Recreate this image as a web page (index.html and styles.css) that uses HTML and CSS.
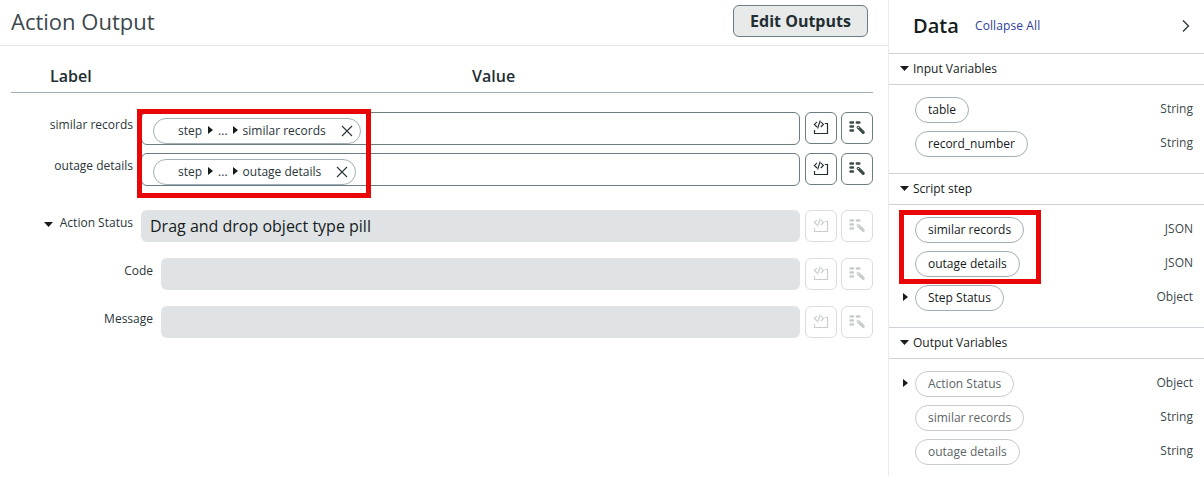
FILE: index.html
```
<!DOCTYPE html>
<html lang="en">
<head>
<meta charset="utf-8">
<title>Action Output</title>
<link rel="stylesheet" href="styles.css">
</head>
<body>
<svg class="defs" width="0" height="0">
  <symbol id="script" viewBox="0 0 32 32">
    <path d="M9.5 18V21.5H22.5V11.5H19.8" fill="none" stroke="currentColor" stroke-width="1.2"/>
    <path d="M12 9.8L9.4 12.4L12 15M15.8 9.8L18.4 12.4L15.8 15M15.2 8.5L12.6 16.5" fill="none" stroke="currentColor" stroke-width="1.1"/>
  </symbol>
  <symbol id="wand" viewBox="0 0 32 32">
    <path d="M9.5 10.5H12M15.8 10.5H18.4M9.5 14.5H12M9.5 18.5H12" fill="none" stroke="currentColor" stroke-width="2.4" stroke-linecap="round"/>
    <path d="M17.2 15.4L22.2 20.4" fill="none" stroke="currentColor" stroke-width="3.2" stroke-linecap="round"/>
    <path d="M16.9 15.1L17.7 15.9" stroke="#fff" stroke-width="1.1"/>
  </symbol>
  <symbol id="close" viewBox="0 0 12 12"><path d="M1 1L11 11M11 1L1 11" fill="none" stroke="currentColor" stroke-width="1.1"/></symbol>
  <symbol id="down" viewBox="0 0 9 5"><path d="M0 0H9L4.5 5Z" fill="currentColor"/></symbol>
  <symbol id="right" viewBox="0 0 5 8"><path d="M0 0L5 4L0 8Z" fill="currentColor"/></symbol>
</svg>
<div class="app">
  <main class="main">
    <header class="head">
      <h1 class="title">Action Output</h1>
      <button class="edit">Edit Outputs</button>
    </header>
    <div class="table">
      <div class="cols"><span class="col-label">Label</span><span class="col-value">Value</span></div>
      <div class="row">
        <label class="label">similar records</label>
        <div class="field"><span class="token token-a"><span>step</span><svg class="sep"><use href="#right"/></svg><span class="dots">...</span><svg class="sep"><use href="#right"/></svg><span>similar records</span><svg class="close"><use href="#close"/></svg></span></div>
        <button class="icon"><svg><use href="#script"/></svg></button>
        <button class="icon"><svg><use href="#wand"/></svg></button>
      </div>
      <div class="row">
        <label class="label">outage details</label>
        <div class="field"><span class="token token-b"><span>step</span><svg class="sep"><use href="#right"/></svg><span class="dots">...</span><svg class="sep"><use href="#right"/></svg><span>outage details</span><svg class="close"><use href="#close"/></svg></span></div>
        <button class="icon"><svg><use href="#script"/></svg></button>
        <button class="icon"><svg><use href="#wand"/></svg></button>
      </div>
      <div class="row row-off">
        <label class="label"><svg class="caret"><use href="#down"/></svg>Action Status</label>
        <div class="field">Drag and drop object type pill</div>
        <button class="icon"><svg><use href="#script"/></svg></button>
        <button class="icon"><svg><use href="#wand"/></svg></button>
      </div>
      <div class="row row-off row-child">
        <label class="label">Code</label>
        <div class="field"></div>
        <button class="icon"><svg><use href="#script"/></svg></button>
        <button class="icon"><svg><use href="#wand"/></svg></button>
      </div>
      <div class="row row-off row-child">
        <label class="label">Message</label>
        <div class="field"></div>
        <button class="icon"><svg><use href="#script"/></svg></button>
        <button class="icon"><svg><use href="#wand"/></svg></button>
      </div>
    </div>
  </main>
  <aside class="side">
    <header class="side-head">
      <h2 class="side-title">Data</h2><a class="collapse">Collapse All</a>
      <svg class="chevron" viewBox="0 0 8 12"><path d="M1 .5L6.5 6L1 11.5" fill="none" stroke="currentColor" stroke-width="1.2"/></svg>
    </header>
    <h3 class="group"><svg class="caret"><use href="#down"/></svg>Input Variables</h3>
    <ul class="items">
      <li class="item"><span class="pill w-table">table</span><span class="type">String</span></li>
      <li class="item"><span class="pill w-number">record_number</span><span class="type">String</span></li>
    </ul>
    <h3 class="group"><svg class="caret"><use href="#down"/></svg>Script step</h3>
    <ul class="items">
      <li class="item"><span class="pill w-similar">similar records</span><span class="type">JSON</span></li>
      <li class="item"><span class="pill w-outage">outage details</span><span class="type">JSON</span></li>
      <li class="item"><svg class="expand"><use href="#right"/></svg><span class="pill w-step">Step Status</span><span class="type">Object</span></li>
    </ul>
    <h3 class="group"><svg class="caret"><use href="#down"/></svg>Output Variables</h3>
    <ul class="items items-muted">
      <li class="item"><svg class="expand"><use href="#right"/></svg><span class="pill w-action">Action Status</span><span class="type">Object</span></li>
      <li class="item"><span class="pill w-similar">similar records</span><span class="type">String</span></li>
      <li class="item"><span class="pill w-outage">outage details</span><span class="type">String</span></li>
    </ul>
  </aside>
  <div class="mark mark-fields"></div>
  <div class="mark mark-pills"></div>
</div>
</body>
</html>
```
FILE: styles.css
```
* { box-sizing: border-box; }
body { margin: 0; background: #fff; color: #161b1c; font: 12px/16px "Open Sans", "Noto Sans", sans-serif; }
h1, h2, h3, ul { margin: 0; padding: 0; font-weight: 400; }
button { font-family: inherit; padding: 0; }
svg { display: block; flex: none; }
.defs { position: absolute; }
.app { position: relative; display: flex; width: 1204px; height: 477px; overflow: hidden; }

.main { width: 889px; height: 476px; border-right: 1px solid #e8eaeb; }
.head { display: flex; justify-content: space-between; align-items: flex-start; height: 46px; padding: 5px 20px 0 11px; border-bottom: 1px solid #e4e6e7; }
.title { font-size: 22px; line-height: 32px; color: #3c484d; }
.edit { width: 135px; height: 32px; border: 1px solid #6b7c83; border-radius: 6px; background: #e8eaea; color: #232e32; font-size: 16px; font-weight: 700; line-height: 30px; }

.table { padding: 0 15px 0 11px; }
.cols { display: flex; height: 47px; margin-bottom: 19px; padding: 19px 0 0 39px; border-bottom: 1px solid #a3afb4; font-size: 16px; line-height: 22px; font-weight: 600; color: #232e32; }
.col-label { width: 422px; }

.row { display: flex; align-items: flex-start; height: 33px; margin-bottom: 8px; }
.label { display: flex; align-items: center; justify-content: flex-end; width: 122px; margin: 5px 8px 0 0; color: #2a353a; }
.label .caret { margin: 3px 7px 0 0; color: #161b1c; }
.field { display: flex; align-items: center; flex: 1; height: 33px; margin-right: 5px; border: 1px solid #6b7c83; border-radius: 6px; }
.row-off { height: 32px; margin-bottom: 16px; }
.row:nth-child(4) { margin-bottom: 16px; }
.row:nth-child(3) { margin-bottom: 24px; }
.row-off .field { height: 32px; padding-left: 9px; border: 0; background: #dfe3e5; font-size: 16px; color: #161b1c; }
.row-child .label { width: 142px; }
.icon { flex: none; width: 32px; height: 32px; border: 1px solid #6b7c83; border-radius: 6px; background: #fff; color: #232e32; }
.icon svg { width: 32px; height: 32px; margin: -1px; }
.icon + .icon { margin-left: 4px; color: #3d4b48; }
.row-off .icon, .row-off .icon + .icon { border-color: #dadddf; color: #c8cccd; }

.token { display: flex; align-items: center; height: 26px; margin: 5px 0 0 11px; padding-left: 24px; border: 1px solid #a3afb4; border-radius: 13px; color: #2a353a; }
.token-a { width: 208px; }
.token-b { width: 203px; }
.sep { width: 5px; height: 8px; margin: -3px 5px 0 6px; color: #161b1c; }
.dots { margin-right: -1px; }
.close { width: 12px; height: 12px; margin: 0 7px 0 auto; color: #2a353a; }
.caret { width: 9px; height: 5px; }

.side { flex: 1; }
.side-head { display: flex; align-items: center; height: 53px; padding: 0 14px 2px 24px; }
.side-title { width: 62px; font-size: 20px; line-height: 28px; font-weight: 600; }
.collapse { color: #2e3d9b; font-weight: 500; letter-spacing: .1px; }
.chevron { width: 8px; height: 12px; margin-left: auto; color: #232e32; }
.group { display: flex; align-items: center; gap: 3px; height: 32px; padding: 0 0 1px 12px; border: solid #cdd3d6; border-width: 1px 0; font-size: 12px; }
.group .caret { margin: 0 1px 0 -1px; }
.items { padding: 12px 11px 8px 26px; list-style: none; }
.item { position: relative; display: flex; justify-content: space-between; align-items: flex-start; height: 34px; }
.pill { height: 26px; padding-left: 12px; border: 1px solid #a3afb4; border-radius: 13px; line-height: 24px; white-space: nowrap; }
.type { line-height: 24px; color: #3c484d; }
.items-muted .pill { color: #5c6567; border-color: #c5cbce; }
.expand { position: absolute; left: -12px; top: 8px; width: 5px; height: 8px; }
.w-table { width: 54px; }
.w-number { width: 113px; }
.w-similar { width: 109px; }
.w-outage { width: 105px; }
.w-step { width: 89px; }
.w-action { width: 99px; }

.mark { position: absolute; border: 5px solid #e90606; }
.mark-fields { left: 137px; top: 109px; width: 234px; height: 89px; }
.mark-pills { left: 899px; top: 210px; width: 142px; height: 74px; }
```
